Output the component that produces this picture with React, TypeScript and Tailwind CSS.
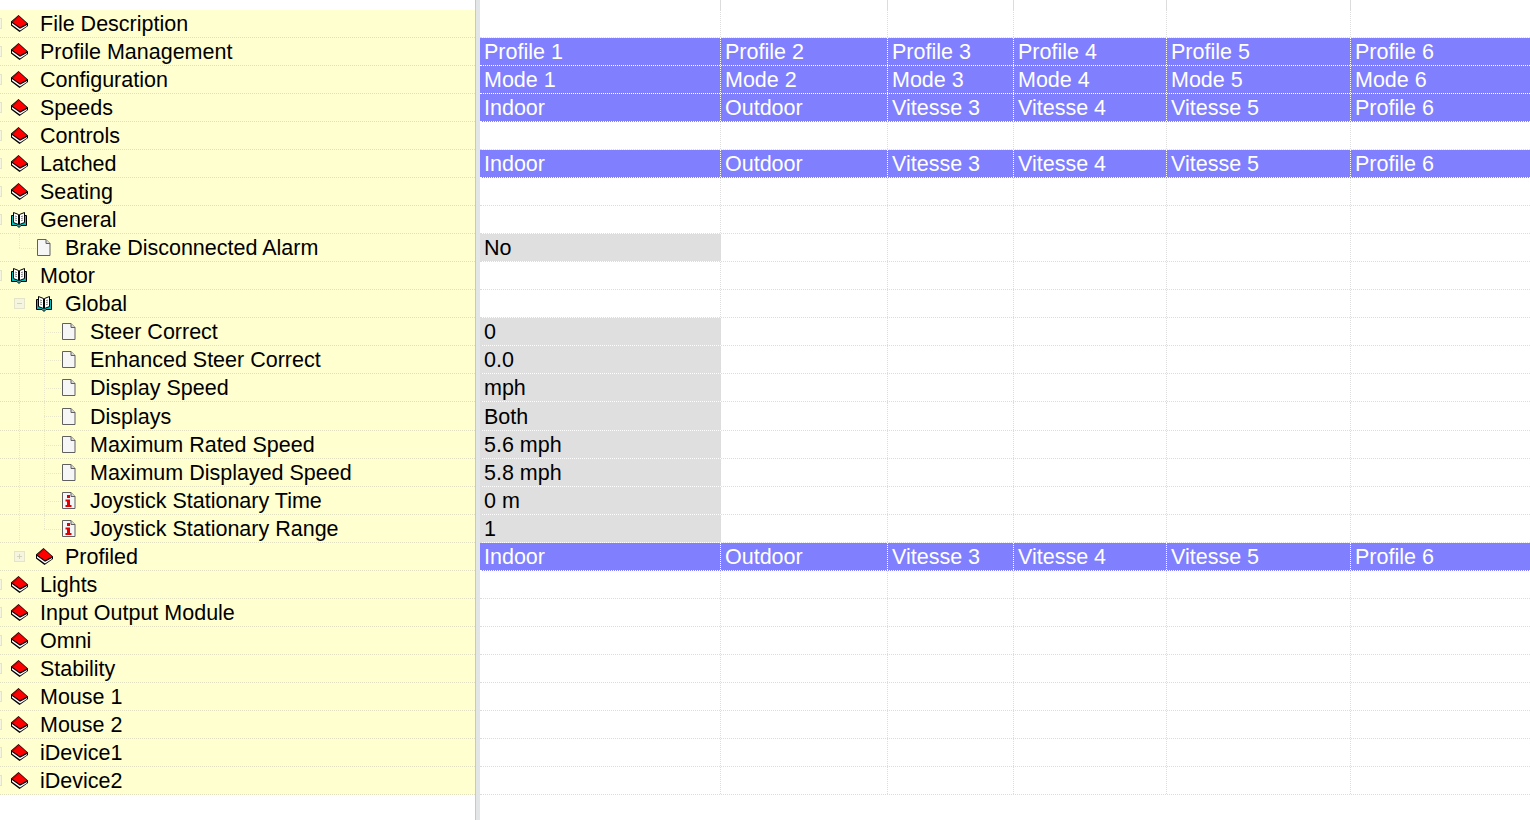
const columns = ['w-[241px]', 'w-[167px]', 'w-[126px]', 'w-[153px]', 'w-[184px]', 'flex-1'];

type Kind = 'book' | 'open' | 'doc' | 'info';

interface TreeRow {
  label: string;
  level: number;
  icon: Kind;
  expander?: 'plus' | 'minus';
  tall?: boolean;
}

const tree: TreeRow[] = [
  { label: 'File Description', level: 0, icon: 'book' },
  { label: 'Profile Management', level: 0, icon: 'book' },
  { label: 'Configuration', level: 0, icon: 'book' },
  { label: 'Speeds', level: 0, icon: 'book' },
  { label: 'Controls', level: 0, icon: 'book' },
  { label: 'Latched', level: 0, icon: 'book' },
  { label: 'Seating', level: 0, icon: 'book' },
  { label: 'General', level: 0, icon: 'open' },
  { label: 'Brake Disconnected Alarm', level: 1, icon: 'doc' },
  { label: 'Motor', level: 0, icon: 'open' },
  { label: 'Global', level: 1, icon: 'open', expander: 'minus' },
  { label: 'Steer Correct', level: 2, icon: 'doc' },
  { label: 'Enhanced Steer Correct', level: 2, icon: 'doc' },
  { label: 'Display Speed', level: 2, icon: 'doc' },
  { label: 'Displays', level: 2, icon: 'doc', tall: true },
  { label: 'Maximum Rated Speed', level: 2, icon: 'doc' },
  { label: 'Maximum Displayed Speed', level: 2, icon: 'doc' },
  { label: 'Joystick Stationary Time', level: 2, icon: 'info' },
  { label: 'Joystick Stationary Range', level: 2, icon: 'info' },
  { label: 'Profiled', level: 1, icon: 'book', expander: 'plus' },
  { label: 'Lights', level: 0, icon: 'book' },
  { label: 'Input Output Module', level: 0, icon: 'book' },
  { label: 'Omni', level: 0, icon: 'book' },
  { label: 'Stability', level: 0, icon: 'book' },
  { label: 'Mouse 1', level: 0, icon: 'book' },
  { label: 'Mouse 2', level: 0, icon: 'book' },
  { label: 'iDevice1', level: 0, icon: 'book' },
  { label: 'iDevice2', level: 0, icon: 'book' },
];

const header = ['Profile 1', 'Profile 2', 'Profile 3', 'Profile 4', 'Profile 5', 'Profile 6'];
const modes = ['Mode 1', 'Mode 2', 'Mode 3', 'Mode 4', 'Mode 5', 'Mode 6'];
const names = ['Indoor', 'Outdoor', 'Vitesse 3', 'Vitesse 4', 'Vitesse 5', 'Profile 6'];

// right hand side, indexed the same as the tree rows
const values: Record<number, string[] | string> = {
  1: header,
  2: modes,
  3: names,
  5: names,
  8: 'No',
  11: '0',
  12: '0.0',
  13: 'mph',
  14: 'Both',
  15: '5.6 mph',
  16: '5.8 mph',
  17: '0 m',
  18: '1',
  19: names,
};

function BookIcon() {
  return (
    <svg width="17" height="17" viewBox="0 0 17 17" className="shrink-0">
      <path d="M7.500 0 0 6.500V10.500L8.500 17 17 11V8.500Z" fill="#000" />
      <path d="M7.500 .8 1 6.800 9 12.300 16 8.500Z" fill="#ff0000" />
      <path d="M1 8 9 13.800 16 10V11L9 15.500 1 9.800Z" fill="#fff" />
      <path d="M2 7 8 1.500" stroke="#b00000" />
    </svg>
  );
}

function OpenBookIcon() {
  return (
    <svg width="16" height="16" viewBox="0 0 16 16" className="shrink-0">
      <path d="M.5 3.500V13.500H6L8 15.500 10 13.500H15.500V3.500Z" fill="#00b8b8" stroke="#000" />
      <path d="M2.500 .5 7.500 2.500V12.500L2.500 10.500Z" fill="#fff" stroke="#000" />
      <path d="M13.500 .5 8.500 2.500V12.500L13.500 10.500Z" fill="#fff" stroke="#000" />
      <path d="M4 4 6 4.800M4 6 6 6.800M4 8 6 8.800M10 4.800 12 4M10 6.800 12 6M10 8.800 12 8" stroke="#808080" />
    </svg>
  );
}

function DocIcon() {
  return (
    <svg width="15" height="17" viewBox="0 0 15 17" className="shrink-0">
      <path d="M1.500 .5H10L14 4.500V16.500H1.500Z" fill="#f6f6f6" stroke="#606060" />
      <path d="M10 .5V4.500H14" fill="#d8d8d8" stroke="#606060" />
    </svg>
  );
}

function InfoIcon() {
  return (
    <svg width="15" height="17" viewBox="0 0 15 17" className="shrink-0">
      <path d="M1.500 .5H10L14 4.500V16.500H1.500Z" fill="#f6f6f6" stroke="#606060" />
      <path d="M10 .5V4.500H14" fill="#d8d8d8" stroke="#606060" />
      <path d="M6 3h3v3H6ZM4.500 7.500H9V13h1.500v2h-6v-2H6V9.500H4.500Z" fill="#e00000" />
    </svg>
  );
}

function RowIcon({ kind }: { kind: Kind }) {
  if (kind === 'book') return <BookIcon />;
  if (kind === 'open') return <OpenBookIcon />;
  if (kind === 'doc') return <DocIcon />;
  return <InfoIcon />;
}

function Expander({ type, className }: { type: 'plus' | 'minus'; className: string }) {
  return (
    <span className={`absolute top-[8px] flex h-[11px] w-[11px] items-center justify-center border border-[#e4e4c8] bg-[#f6f6e0] ${className}`}>
      <span className="absolute h-px w-[5px] bg-[#d4d4b4]" />
      {type === 'plus' && <span className="absolute h-[5px] w-px bg-[#d4d4b4]" />}
    </span>
  );
}

// faint connector lines of the tree control
function Connector({ level, last }: { level: number; last?: boolean }) {
  const x = level === 1 ? 'left-[19px] w-[17px]' : 'left-[44px] w-[17px]';
  return (
    <>
      <span className={`absolute top-0 border-l border-dotted border-[#e8e8c8] ${level === 1 ? 'left-[19px]' : 'left-[44px]'} ${last ? 'h-[14px]' : 'h-full'}`} />
      <span className={`absolute top-[14px] border-t border-dotted border-[#e8e8c8] ${x}`} />
    </>
  );
}

function LeftRow({ row, last }: { row: TreeRow; last?: boolean }) {
  const indent = row.level === 0 ? 'pl-[11px]' : row.level === 1 ? 'pl-[36px]' : 'pl-[61px]';
  const gap = row.icon === 'book' ? 'gap-[12px]' : row.icon === 'open' ? 'gap-[13px]' : 'gap-[14px]';
  return (
    <div className={`relative flex items-center border-b border-dotted border-[#e0e0c0] ${row.tall ? 'h-[29px]' : 'h-[28px]'} ${indent} ${gap}`}>
      {row.level === 0 && <Expander type="plus" className="left-[-9px]" />}
      {row.level === 2 && <Connector level={2} last={last} />}
      {row.level === 1 && !row.expander && <Connector level={1} last />}
      {row.level === 2 && <span className="absolute left-[19px] top-0 h-full border-l border-dotted border-[#e8e8c8]" />}
      {row.expander && <Expander type={row.expander} className="left-[14px]" />}
      <RowIcon kind={row.icon} />
      <span className="whitespace-nowrap pt-[2px]">{row.label}</span>
    </div>
  );
}

function RightRow({ value, tall }: { value?: string[] | string; tall?: boolean }) {
  const height = tall ? 'h-[29px]' : 'h-[28px]';
  if (Array.isArray(value)) {
    return (
      <div className={`flex border-b border-dotted border-white bg-[#8080ff] text-white ${height}`}>
        {columns.map((col, i) => (
          <div key={i} className={`${col} flex items-center border-r border-dotted border-white pl-[4px] pt-[2px] last:border-r-0`}>
            {value[i]}
          </div>
        ))}
      </div>
    );
  }
  return (
    <div className={`flex border-b border-dotted border-[#dcdcdc] ${height}`}>
      {columns.map((col, i) => (
        <div
          key={i}
          className={`${col} flex items-center border-r border-dotted border-[#dcdcdc] pl-[4px] pt-[2px] last:border-r-0 ${i === 0 && value ? 'bg-[#dfdfdf]' : ''}`}
        >
          {i === 0 ? value : null}
        </div>
      ))}
    </div>
  );
}

export default function App() {
  return (
    <div className="flex h-[820px] w-[1530px] overflow-hidden bg-white text-[21.5px] text-black font-['Liberation_Sans',Arial,sans-serif]">
      <div className="w-[475px] shrink-0 overflow-hidden pt-[10px]">
        <div className="bg-[#ffffd0]">
          {tree.map((row, i) => (
            <LeftRow key={row.label} row={row} last={i === 18} />
          ))}
        </div>
      </div>
      <div className="w-[5px] shrink-0 border-l border-[#c8c8c8] bg-[#e2e6e6]" />
      <div className="flex-1">
        <div className="flex h-[10px]">
          {columns.map((col, i) => (
            <div key={i} className={`${col} border-r border-[#dcdcdc] last:border-r-0`} />
          ))}
        </div>
        <div className="flex h-[28px] border-b border-dotted border-[#dcdcdc]">
          {columns.map((col, i) => (
            <div key={i} className={`${col} border-r border-dotted border-[#dcdcdc] last:border-r-0`} />
          ))}
        </div>
        {tree.slice(1).map((row, i) => (
          <RightRow key={row.label} value={values[i + 1]} tall={row.tall} />
        ))}
      </div>
    </div>
  );
}
